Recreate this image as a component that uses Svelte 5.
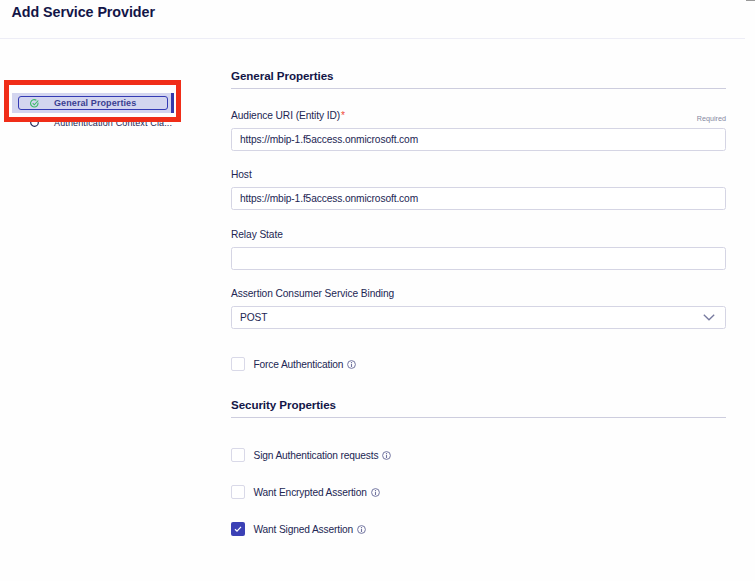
<script>
  const fields = [
    { label: 'Audience URI (Entity ID)', value: 'https://mbip-1.f5access.onmicrosoft.com', required: true },
    { label: 'Host', value: 'https://mbip-1.f5access.onmicrosoft.com' },
    { label: 'Relay State', value: '' },
    { label: 'Assertion Consumer Service Binding', value: 'POST', select: true }
  ];
  const security = [
    { label: 'Sign Authentication requests', checked: false },
    { label: 'Want Encrypted Assertion', checked: false },
    { label: 'Want Signed Assertion', checked: true }
  ];
</script>

{#snippet check(label, checked)}
  <div class="check">
    <span class="box" class:checked>
      {#if checked}
        <svg width="14" height="14" viewBox="0 0 14 14"><path d="M4 7.3 6 9.2 10 4.8" fill="none" stroke="#fff" stroke-width="1.2" /></svg>
      {/if}
    </span>
    <span class="check-label">{label}</span>
    <svg class="info" width="9" height="9" viewBox="0 0 9 9">
      <circle cx="4.5" cy="4.5" r="3.9" fill="none" stroke="#7275a0" stroke-width="1" />
      <path d="M4.5 3.7V7M4.5 2V3.1" stroke="#7275a0" stroke-width="1.1" />
    </svg>
  </div>
{/snippet}

<div class="page">
  <header><h1>Add Service Provider</h1></header>
  <span class="scroll"></span>
  <div class="body">
    <nav>
      <div class="step active">
        <div class="pill">
          <svg width="9" height="9" viewBox="0 0 9 9">
            <path d="M7.9 3.6A3.7 3.7 0 1 1 6.4 1.3M2.7 4.2 4.3 5.8 8.3 1.5" fill="none" stroke="#3dbb68" stroke-width="1.1" />
          </svg>
          <span>General Properties</span>
        </div>
      </div>
      <div class="step next">
        <svg width="9" height="9" viewBox="0 0 9 9"><circle cx="4.5" cy="4.5" r="3.8" fill="none" stroke="#222653" stroke-width="1.2" /></svg>
        <span>Authentication Context Cla...</span>
      </div>
      <div class="highlight"></div>
    </nav>
    <main>
      <h2>General Properties</h2>
      <div class="fields">
        {#each fields as f}
          <div class="field">
            <div class="label">
              <span>{f.label}{#if f.required}<b>*</b>{/if}</span>
              {#if f.required}<small>Required</small>{/if}
            </div>
            <div class="input">
              <span>{f.value}</span>
              {#if f.select}
                <svg width="12" height="7" viewBox="0 0 12 7"><path d="M.8.8 6 5.8 11.2.8" fill="none" stroke="#777a9f" stroke-width="1.3" /></svg>
              {/if}
            </div>
          </div>
        {/each}
      </div>
      {@render check('Force Authentication', false)}
      <h2 class="second">Security Properties</h2>
      <div class="checks">
        {#each security as s}
          {@render check(s.label, s.checked)}
        {/each}
      </div>
    </main>
  </div>
</div>

<style>
  :global(body) { background: #fff; }
  .page {
    position: relative;
    width: 755px;
    height: 581px;
    overflow: hidden;
    background: #fefefe;
    color: #222653;
    font-family: "Liberation Sans", Arial, sans-serif;
    font-size: 10.2px;
    letter-spacing: -.11px;
  }
  header {
    box-sizing: border-box;
    width: 745px;
    height: 39px;
    padding: 4px 0 0 11.5px;
    border-bottom: 1px solid #ededf6;
  }
  h1 { margin: 0; font-size: 14.3px; line-height: 17px; letter-spacing: -.06px; color: #131547; white-space: nowrap; }
  .scroll { position: absolute; right: 0; top: 0; width: 9px; height: 1px; background: #999; }
  .body { display: flex; }
  nav { position: relative; width: 231px; padding-top: 54px; box-sizing: border-box; flex: none; }
  .step { display: flex; align-items: center; font-size: 9px; white-space: nowrap; }
  .active {
    box-sizing: border-box;
    width: 162px;
    height: 20px;
    margin-left: 12px;
    padding-left: 6px;
    border-right: 3px solid #3439ab;
    background: #d3d5ef;
  }
  .pill {
    box-sizing: border-box;
    display: flex;
    align-items: center;
    gap: 15px;
    width: 149.5px;
    height: 14px;
    padding-left: 11px;
    border: 1.5px solid #343ab4;
    border-radius: 3px;
    color: #3a3e91;
    font-weight: bold;
    letter-spacing: .1px;
  }
  .next { gap: 15px; height: 19px; margin-left: 30px; letter-spacing: .14px; }
  .highlight {
    position: absolute;
    left: 4px;
    top: 41px;
    box-sizing: border-box;
    width: 177px;
    height: 42px;
    border: 5px solid #f02d18;
  }
  main { width: 495px; padding-top: 29px; }
  h2 {
    box-sizing: border-box;
    height: 21px;
    margin: 0;
    border-bottom: 1px solid #cdcdde;
    font-size: 11.6px;
    line-height: 15px;
    letter-spacing: -.07px;
    color: #131547;
  }
  .fields { padding-top: 18.5px; }
  .field { height: 59.5px; }
  .label { display: flex; justify-content: space-between; height: 20px; line-height: 15px; letter-spacing: -.08px; }
  .label b { margin-left: 1px; font-weight: normal; color: #ef4938; }
  small { padding-top: 4px; font-size: 7.2px; line-height: 14px; letter-spacing: 0; color: #8587a1; }
  .input {
    box-sizing: border-box;
    display: flex;
    align-items: center;
    justify-content: space-between;
    height: 23px;
    padding: 0 10px 0 8px;
    border: 1px solid #d5d5e4;
    border-radius: 2.5px;
    background: #fff;
  }
  .check { display: flex; align-items: center; height: 14px; margin-top: 11.5px; white-space: nowrap; letter-spacing: -.15px; }
  .box { box-sizing: border-box; width: 14px; height: 14px; margin-right: 8.5px; border: 1px solid #d9d9e8; border-radius: 2px; background: #fff; }
  .box.checked { border: 0; background: #3b40b5; }
  .box svg { display: block; }
  .info { margin-left: 4px; }
  .second { margin-top: 26px; }
  .checks { display: flex; flex-direction: column; gap: 23px; padding-top: 30px; }
  .checks .check { margin-top: 0; }
</style>
